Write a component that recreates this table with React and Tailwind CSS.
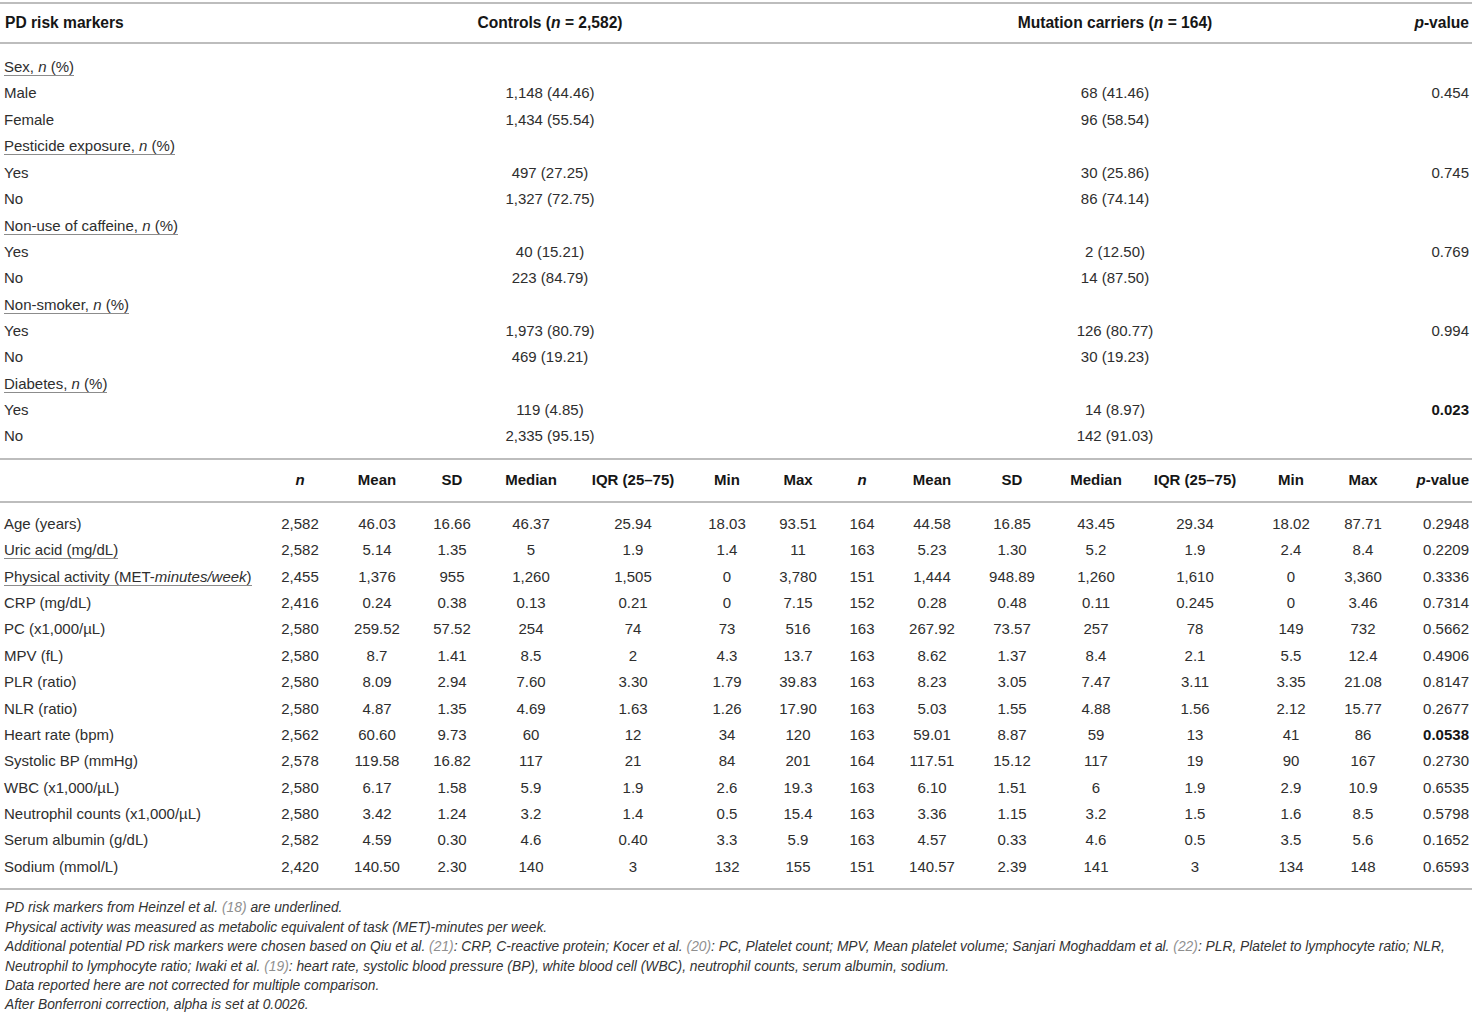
import React from 'react';

const topRows = [
  { group: ['Sex, ', 'n', ' (%)'] },
  { label: 'Male', c: '1,148 (44.46)', m: '68 (41.46)', p: '0.454' },
  { label: 'Female', c: '1,434 (55.54)', m: '96 (58.54)' },
  { group: ['Pesticide exposure, ', 'n', ' (%)'] },
  { label: 'Yes', c: '497 (27.25)', m: '30 (25.86)', p: '0.745' },
  { label: 'No', c: '1,327 (72.75)', m: '86 (74.14)' },
  { group: ['Non-use of caffeine, ', 'n', ' (%)'] },
  { label: 'Yes', c: '40 (15.21)', m: '2 (12.50)', p: '0.769' },
  { label: 'No', c: '223 (84.79)', m: '14 (87.50)' },
  { group: ['Non-smoker, ', 'n', ' (%)'] },
  { label: 'Yes', c: '1,973 (80.79)', m: '126 (80.77)', p: '0.994' },
  { label: 'No', c: '469 (19.21)', m: '30 (19.23)' },
  { group: ['Diabetes, ', 'n', ' (%)'] },
  { label: 'Yes', c: '119 (4.85)', m: '14 (8.97)', p: '0.023', bold: true },
  { label: 'No', c: '2,335 (95.15)', m: '142 (91.03)' },
];

const heads = ['n', 'Mean', 'SD', 'Median', 'IQR (25–75)', 'Min', 'Max', 'n', 'Mean', 'SD', 'Median', 'IQR (25–75)', 'Min', 'Max'];

// label, values, p, underlined, bold p
const stats = [
  ['Age (years)', '2,582 46.03 16.66 46.37 25.94 18.03 93.51 164 44.58 16.85 43.45 29.34 18.02 87.71', '0.2948'],
  ['Uric acid (mg/dL)', '2,582 5.14 1.35 5 1.9 1.4 11 163 5.23 1.30 5.2 1.9 2.4 8.4', '0.2209', true],
  ['activity', '2,455 1,376 955 1,260 1,505 0 3,780 151 1,444 948.89 1,260 1,610 0 3,360', '0.3336', true],
  ['CRP (mg/dL)', '2,416 0.24 0.38 0.13 0.21 0 7.15 152 0.28 0.48 0.11 0.245 0 3.46', '0.7314'],
  ['PC (x1,000/µL)', '2,580 259.52 57.52 254 74 73 516 163 267.92 73.57 257 78 149 732', '0.5662'],
  ['MPV (fL)', '2,580 8.7 1.41 8.5 2 4.3 13.7 163 8.62 1.37 8.4 2.1 5.5 12.4', '0.4906'],
  ['PLR (ratio)', '2,580 8.09 2.94 7.60 3.30 1.79 39.83 163 8.23 3.05 7.47 3.11 3.35 21.08', '0.8147'],
  ['NLR (ratio)', '2,580 4.87 1.35 4.69 1.63 1.26 17.90 163 5.03 1.55 4.88 1.56 2.12 15.77', '0.2677'],
  ['Heart rate (bpm)', '2,562 60.60 9.73 60 12 34 120 163 59.01 8.87 59 13 41 86', '0.0538', false, true],
  ['Systolic BP (mmHg)', '2,578 119.58 16.82 117 21 84 201 164 117.51 15.12 117 19 90 167', '0.2730'],
  ['WBC (x1,000/µL)', '2,580 6.17 1.58 5.9 1.9 2.6 19.3 163 6.10 1.51 6 1.9 2.9 10.9', '0.6535'],
  ['Neutrophil counts (x1,000/µL)', '2,580 3.42 1.24 3.2 1.4 0.5 15.4 163 3.36 1.15 3.2 1.5 1.6 8.5', '0.5798'],
  ['Serum albumin (g/dL)', '2,582 4.59 0.30 4.6 0.40 3.3 5.9 163 4.57 0.33 4.6 0.5 3.5 5.6', '0.1652'],
  ['Sodium (mmol/L)', '2,420 140.50 2.30 140 3 132 155 151 140.57 2.39 141 3 134 148', '0.6593'],
];

const topGrid = 'grid grid-cols-[400px_300px_230px_370px_1fr] items-center';
const statGrid = 'grid grid-cols-[262px_76px_78px_72px_86px_118px_70px_72px_56px_84px_76px_92px_106px_86px_58px_80px] items-center';

function Rule() {
  return <div className="h-[2px] bg-[#bdbdbd]" />;
}

function Ref({ n }) {
  return <span className="text-[#8f8f8f]">({n})</span>;
}

export default function App() {
  return (
    <div className="w-[1472px] h-[1017px] overflow-hidden bg-white font-['Liberation_Sans',Arial,sans-serif] text-[15px] text-[#2e2e2e] pt-[2px]">
      <Rule />
      {/* Top header */}
      <div className={`${topGrid} h-[38px] font-bold text-[15.6px] text-[#161616]`}>
        <div className="pl-[5px]">PD risk markers</div>
        <div className="text-center">Controls (<i>n</i> = 2,582)</div>
        <div />
        <div className="text-center">Mutation carriers (<i>n</i> = 164)</div>
        <div className="text-right pr-[3px]"><i>p</i>-value</div>
      </div>
      <Rule />

      <div className="pt-[10px] pb-[8px]">
        {topRows.map((r, i) =>
          r.group ? (
            <div key={i} className="h-[26.4px] flex items-center pl-[4px]">
              <span className="border-b border-[#8c8c8c] leading-[17px]">
                {r.group[0]}<i>{r.group[1]}</i>{r.group[2]}
              </span>
            </div>
          ) : (
            <div key={i} className={`${topGrid} h-[26.4px]`}>
              <div className="pl-[4px]">{r.label}</div>
              <div className="text-center">{r.c}</div>
              <div />
              <div className="text-center">{r.m}</div>
              <div className={`text-right pr-[3px] ${r.bold ? 'font-bold text-[#161616]' : ''}`}>{r.p}</div>
            </div>
          )
        )}
      </div>
      <Rule />

      {/* Stats header */}
      <div className={`${statGrid} h-[41px] font-bold text-[#161616]`}>
        <div />
        {heads.map((h, i) => (
          <div key={i} className="text-center">{h === 'n' ? <i>n</i> : h}</div>
        ))}
        <div className="text-right pr-[3px]"><i>p</i>-value</div>
      </div>
      <Rule />

      <div className="pt-[8px] pb-[8px]">
        {stats.map(([label, vals, p, under, bold], i) => (
          <div key={i} className={`${statGrid} h-[26.4px]`}>
            <div className="pl-[4px] whitespace-nowrap">
              {label === 'activity' ? (
                <span className="border-b border-[#8c8c8c] leading-[17px]">
                  Physical activity (MET-<i>minutes/week</i>)
                </span>
              ) : under ? (
                <span className="border-b border-[#8c8c8c] leading-[17px]">{label}</span>
              ) : (
                label
              )}
            </div>
            {vals.split(' ').map((v, j) => (
              <div key={j} className="text-center">{v}</div>
            ))}
            <div className={`text-right pr-[3px] ${bold ? 'font-bold text-[#161616]' : ''}`}>{p}</div>
          </div>
        ))}
      </div>
      <Rule />

      {/* Footnotes */}
      <div className="pt-[8px] pl-[5px] italic text-[13.8px] leading-[19.4px] text-[#333] whitespace-nowrap">
        <p>PD risk markers from Heinzel et al. <Ref n="18" /> are underlined.</p>
        <p>Physical activity was measured as metabolic equivalent of task (MET)-minutes per week.</p>
        <p>
          Additional potential PD risk markers were chosen based on Qiu et al. <Ref n="21" />: CRP, C-reactive protein; Kocer et al. <Ref n="20" />: PC, Platelet count; MPV, Mean platelet volume; Sanjari Moghaddam et al. <Ref n="22" />: PLR, Platelet to lymphocyte ratio; NLR,
          <br />
          Neutrophil to lymphocyte ratio; Iwaki et al. <Ref n="19" />: heart rate, systolic blood pressure (BP), white blood cell (WBC), neutrophil counts, serum albumin, sodium.
        </p>
        <p>Data reported here are not corrected for multiple comparison.</p>
        <p>After Bonferroni correction, alpha is set at 0.0026.</p>
      </div>
    </div>
  );
}
